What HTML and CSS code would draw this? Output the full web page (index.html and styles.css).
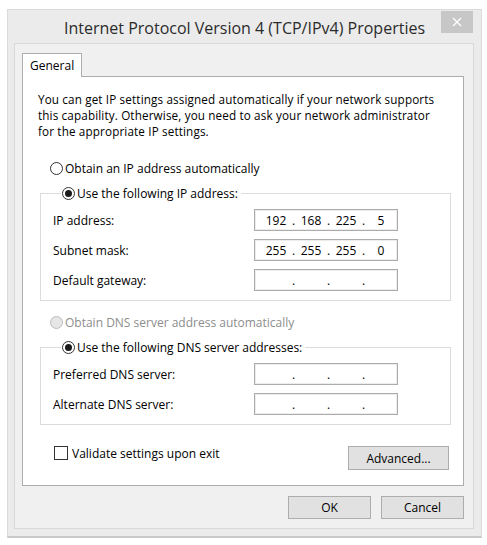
FILE: index.html
```html
<!DOCTYPE html>
<html lang="en">

<head>
    <meta charset="UTF-8">
    <meta name="viewport" content="width=device-width, initial-scale=1">
    <title>Internet Protocol Version 4 (TCP/IPv4) Properties</title>
    <link rel="stylesheet" href="styles.css">
</head>

<body>

    <div class="window">
        <!-- title bar -->
        <div class="titlebar">
            <span class="title">Internet Protocol Version 4 (TCP/IPv4) Properties</span>
            <span class="close">
                <svg width="10" height="10" viewBox="0 0 10 10">
                    <path d="M1 1 L9 9 M9 1 L1 9" stroke="#fff" stroke-width="1.3" fill="none" />
                </svg>
            </span>
        </div>

        <div class="client">
            <div class="tabs">
                <div class="tab">General</div>
            </div>

            <div class="panel">
                <p class="intro">You can get IP settings assigned automatically if your network supports<br>
                    this capability. Otherwise, you need to ask your network administrator<br>
                    for the appropriate IP settings.</p>

                <div class="radio first"><span class="circle"></span>Obtain an IP address automatically</div>

                <fieldset class="group">
                    <legend><span class="radio"><span class="circle checked"></span>Use the following IP address:</span></legend>
                    <div class="field">
                        <span>IP address:</span>
                        <div class="ip"><span>192</span><i>.</i><span>168</span><i>.</i><span>225</span><i>.</i><span>5</span></div>
                    </div>
                    <div class="field">
                        <span>Subnet mask:</span>
                        <div class="ip"><span>255</span><i>.</i><span>255</span><i>.</i><span>255</span><i>.</i><span>0</span></div>
                    </div>
                    <div class="field">
                        <span>Default gateway:</span>
                        <div class="ip"><span></span><i>.</i><span></span><i>.</i><span></span><i>.</i><span></span></div>
                    </div>
                </fieldset>

                <div class="radio disabled"><span class="circle"></span>Obtain DNS server address automatically</div>

                <fieldset class="group">
                    <legend><span class="radio"><span class="circle checked"></span>Use the following DNS server addresses:</span></legend>
                    <div class="field">
                        <span>Preferred DNS server:</span>
                        <div class="ip"><span></span><i>.</i><span></span><i>.</i><span></span><i>.</i><span></span></div>
                    </div>
                    <div class="field">
                        <span>Alternate DNS server:</span>
                        <div class="ip"><span></span><i>.</i><span></span><i>.</i><span></span><i>.</i><span></span></div>
                    </div>
                </fieldset>

                <div class="panel-foot">
                    <div class="check"><span class="box"></span>Validate settings upon exit</div>
                    <button class="btn advanced">Advanced...</button>
                </div>
            </div>

            <div class="actions">
                <button class="btn">OK</button>
                <button class="btn">Cancel</button>
            </div>
        </div>
    </div>

</body>

</html>
```

FILE: styles.css
```css
body {
    font-family: 'Open Sans', 'Liberation Sans', sans-serif;
    font-size: 12px;
    color: #000;
    background-color: #fff;
    margin: 0;
    padding: 0;
}

.window {
    width: 473px;
    height: 526px;
    margin: 9px 0 0 7px;
    background-color: #ebebeb;
    border: 1px solid #dadada;
    border-bottom: 2px solid #c9c9c9;
}

.titlebar {
    position: relative;
    height: 33px;
    display: flex;
    align-items: center;
    justify-content: center;
}

.title {
    font-size: 16px;
    color: #2b2b2b;
    margin-top: 2px;
}

.close {
    position: absolute;
    top: 1px;
    right: 8px;
    width: 32px;
    height: 22px;
    background-color: #c7c7c7;
    display: flex;
    align-items: center;
    justify-content: center;
}

.client {
    margin: 0 7px 0 6px;
    background-color: #f0f0f0;
    border: 1px solid #d9d9d9;
    padding: 9px 9px 0 7px;
    box-sizing: border-box;
    height: 486px;
}

.tabs {
    display: flex;
    height: 23px;
}

.tab {
    width: 60px;
    height: 24px;
    box-sizing: border-box;
    padding: 3px 0 0 7px;
    background-color: #fff;
    border: 1px solid #adadad;
    border-bottom: none;
    position: relative;
    z-index: 1;
}

.panel {
    height: 410px;
    box-sizing: border-box;
    background-color: #fff;
    border: 1px solid #adadad;
    padding: 14px 12px 0 15px;
}

.intro {
    margin: 0;
    font-size: 11.7px;
    letter-spacing: 0.14px;
    line-height: 16px;
}

.radio {
    display: flex;
    align-items: center;
    height: 16px;
    white-space: nowrap;
}

.radio.first {
    margin: 21px 0 0 12px;
}

.radio.disabled {
    margin: 13px 0 0 12px;
    color: #8d8d8d;
}

.circle {
    width: 13px;
    height: 13px;
    box-sizing: border-box;
    border: 1px solid #333;
    border-radius: 50%;
    background-color: #fff;
    margin-right: 2px;
    display: flex;
    align-items: center;
    justify-content: center;
}

.circle.checked::after {
    content: "";
    width: 7px;
    height: 7px;
    border-radius: 50%;
    background-color: #1a1a1a;
}

.disabled .circle {
    border-color: #bcbcbc;
    background-color: #e6e6e6;
}

.group {
    margin: 9px 0 0 2px;
    padding: 8px 0 9px 12px;
    border: 1px solid #dcdcdc;
}

.group legend {
    margin-left: 8px;
    padding: 0 3px 0 1px;
}

.field {
    display: flex;
    align-items: center;
    height: 22px;
}

.field + .field {
    margin-top: 8px;
}

.field > span {
    width: 201px;
}

.ip {
    width: 144px;
    height: 22px;
    box-sizing: border-box;
    border: 1px solid #acacac;
    box-shadow: inset 0 0 0 1px #ececec;
    padding-left: 7px;
    display: flex;
    align-items: center;
}

.ip span {
    width: 28px;
    text-align: center;
}

.ip i {
    font-style: normal;
    width: 7px;
    text-align: center;
}

.panel-foot {
    display: flex;
    justify-content: space-between;
    align-items: flex-start;
    margin: 20px 0 0 16px;
}

.check {
    display: flex;
    align-items: center;
    height: 16px;
}

.box {
    width: 14px;
    height: 14px;
    box-sizing: border-box;
    border: 1px solid #333;
    background-color: #fff;
    margin-right: 4px;
}

.btn {
    font-family: inherit;
    font-size: 12px;
    color: #000;
    background-color: #e1e1e1;
    border: 1px solid #adadad;
    padding: 0;
    height: 23px;
    width: 83px;
}

.advanced {
    width: 101px;
    height: 24px;
    margin: 1px 2px 0 0;
}

.actions {
    display: flex;
    justify-content: flex-end;
    gap: 10px;
    margin-top: 10px;
}
```
